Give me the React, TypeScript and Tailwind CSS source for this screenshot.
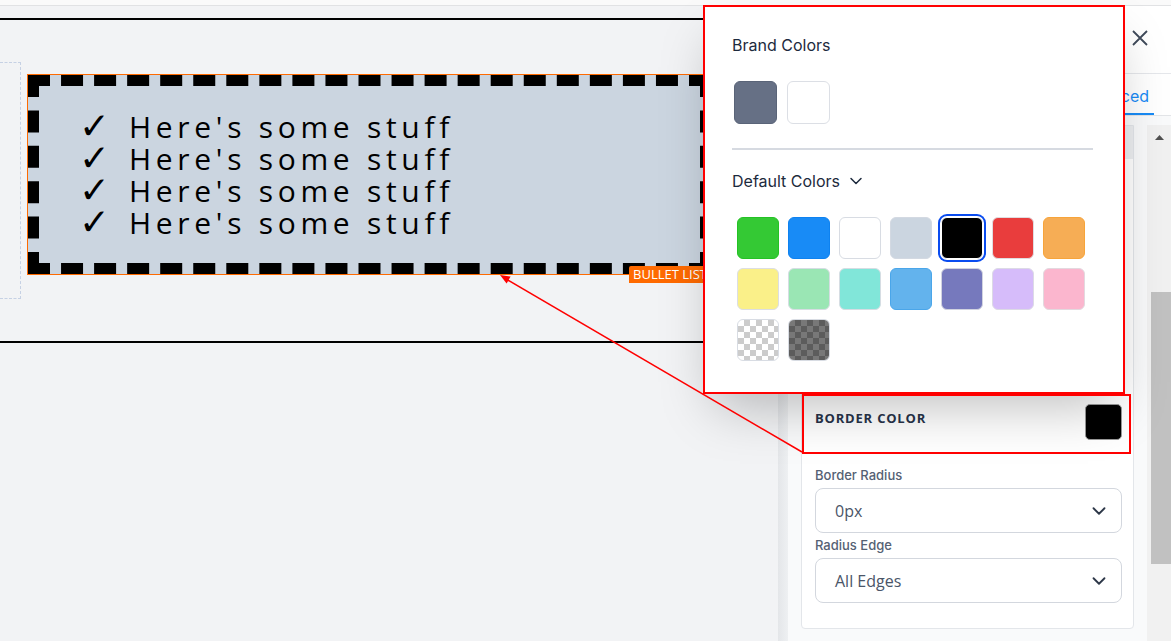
import React from 'react';
import { ChevronDown } from 'lucide-react';

const brandColors = ['bg-[#667085] border-[#5a6478]', 'bg-white border-[#dcdfe5]'];

const defaultColors = [
  { cls: 'bg-[#34c934] border-[#25c225]' },
  { cls: 'bg-[#188bf6] border-[#0e82f0]' },
  { cls: 'bg-white border-[#d8dce3]' },
  { cls: 'bg-[#cbd5e0] border-[#d3d9e2]' },
  { cls: 'bg-black border-white', selected: true },
  { cls: 'bg-[#e93d3d] border-[#e0dde0]' },
  { cls: 'bg-[#f6ad55] border-[#f7a43a]' },
  { cls: 'bg-[#faf089] border-[#dcdee3]' },
  { cls: 'bg-[#9ae6b4] border-[#d6dde3]' },
  { cls: 'bg-[#81e6d9] border-[#d6dde3]' },
  { cls: 'bg-[#63b3ed] border-[#4aa6ea]' },
  { cls: 'bg-[#7679bd] border-[#d1d3e0]' },
  { cls: 'bg-[#d6bcfa] border-[#dcdae6]' },
  { cls: 'bg-[#fbb6ce] border-[#e3d9df]' },
  { cls: 'bg-[image:repeating-conic-gradient(#cccccc_0_25%,#ffffff_0_50%)] bg-[length:12px_12px] border-[#d8dce3]' },
  { cls: 'bg-[image:repeating-conic-gradient(#5c5c5c_0_25%,#787878_0_50%)] bg-[length:12px_12px] border-[#d8dce3]' },
];

const items = [1, 2, 3, 4];

const SelectBox: React.FC<{ value: string }> = ({ value }) => (
  <div className="flex items-center justify-between h-[45px] w-[307px] rounded-[8px] border border-[#d3d7de] bg-white pl-[19px] pr-[11px]">
    <span className="text-[16px] text-[#4a5568]">{value}</span>
    <ChevronDown size={22} strokeWidth={2} className="text-[#2d3748]" />
  </div>
);

const App: React.FC = () => {
  return (
    <div className="relative w-[1171px] h-[641px] overflow-hidden bg-[#f2f3f5] flex flex-col" style={{ fontFamily: "Inter, 'Noto Sans', sans-serif" }}>
      {/* top bar edge */}
      <div className="h-[6px] shrink-0 bg-[#fafafa] border-b border-[#e1e2e4]" />

      <div className="flex flex-1 min-h-0">
        {/* canvas */}
        <div className="w-[778px] shrink-0 pt-[12px]">
          <div className="h-[325px] border-y-2 border-black pt-[42px]">
            <div className="flex items-start">
              <div className="w-[21px] h-[237px] border-y border-r border-dashed border-[#c6d1e4]" />
              <div className="relative ml-[6px] mt-[12px] w-[685px] h-[201px] border border-[#ff6a00]">
                <div
                  className="h-full border-[11px] border-dashed border-black bg-[#cbd5e0] pl-[44px] pt-[25px] text-black text-[30px] leading-[32px] tracking-[4.7px]"
                  style={{ fontFamily: "'Open Sans', 'DejaVu Sans', sans-serif" }}
                >
                  {items.map((i) => (
                    <div key={i} className="flex items-center h-[32px] whitespace-nowrap">
                      <span className="-ml-[4px] w-[50px] text-[37px] leading-[32px] font-bold" style={{ fontFamily: "'DejaVu Sans', sans-serif" }}>✓</span>
                      <span>Here's some stuff</span>
                    </div>
                  ))}
                </div>
                <div
                  className="absolute right-0 -bottom-[9px] h-[17px] px-[4px] bg-[#ff6a00] text-white text-[13px] leading-[17px] rounded-tl-[2px] whitespace-nowrap"
                  style={{ fontFamily: "'Open Sans', sans-serif" }}
                >
                  BULLET LIST
                </div>
              </div>
            </div>
          </div>
        </div>

        {/* right settings panel */}
        <div className="flex flex-1 min-w-0">
          <div className="w-[10px] shrink-0 bg-gradient-to-r from-[#e4e6e9] to-[#eef0f2]" />
          <div className="flex flex-col flex-1 min-w-0 bg-[#f9fafb]">
            <div className="h-[68px] shrink-0 bg-white border-b border-[#e5e7eb] flex items-center justify-end pr-[23px] pb-[4px]">
              <svg width="16" height="16" viewBox="0 0 16 16" className="text-[#3f4a5a]">
                <path d="M1 1 15 15M15 1 1 15" stroke="currentColor" strokeWidth="1.8" fill="none" />
              </svg>
            </div>
            <div className="h-[42px] shrink-0 bg-white border-b border-[#e3e5e8] flex justify-end pr-[17px]">
              <div className="flex items-center pt-[5px] px-[5px] border-b-2 border-[#188bf6] text-[16px] text-[#188bf6]">
                Advanced
              </div>
            </div>
            <div className="flex flex-1 min-h-0 pt-[9px]">
              <div className="flex-1 px-[13px]">
                <div className="w-[333px] bg-white border border-[#e3e6ea] rounded-b-[4px]" style={{ fontFamily: "'Open Sans', sans-serif" }}>
                  <div className="h-[33px] bg-[#eceef1]" />
                  <div className="h-[236px]" />
                  <div className="h-[59px] flex items-start justify-between pl-[13px] pr-[11px] pt-[9px]">
                    <span className="mt-[5px] text-[13px] leading-[18px] font-bold tracking-[0.8px] text-[#27334a]">BORDER COLOR</span>
                    <div className="w-[37px] h-[36px] rounded-[5px] bg-black border border-[#9a9a9a]" />
                  </div>
                  <div className="pl-[13px] pr-[11px] pb-[25px]" >
                    <div className="mt-[12px] text-[13px] leading-[18px] font-medium text-[#556174]" style={{ fontFamily: "Inter, sans-serif" }}>Border Radius</div>
                    <div className="mt-[4px]">
                      <SelectBox value="0px" />
                    </div>
                    <div className="mt-[3px] text-[13px] leading-[18px] font-medium text-[#556174]" style={{ fontFamily: "Inter, sans-serif" }}>Radius Edge</div>
                    <div className="mt-[4px]">
                      <SelectBox value="All Edges" />
                    </div>
                  </div>
                </div>
              </div>
              {/* scrollbar */}
              <div className="w-[24px] shrink-0 bg-[#f1f1f1] flex flex-col items-center">
                <div className="h-[25px] w-full flex items-center justify-center">
                  <svg width="9" height="5" viewBox="0 0 9 5">
                    <path d="M4.5 0 9 5H0z" fill="#505050" />
                  </svg>
                </div>
                <div className="mt-[142px] ml-[4px] w-[21px] h-[272px] bg-[#c1c1c1]" />
              </div>
            </div>
          </div>
        </div>
      </div>

      {/* color picker popover */}
      <div className="absolute left-[703px] top-[5px] w-[422px] h-[389px] bg-white border-2 border-[#ff0000] shadow-[0_25px_50px_-12px_rgba(0,0,0,0.25)] pt-[26px] pl-[27px] pr-[28px]">
        <div className="text-[16px] leading-[24px] text-[#1d2a3d]">Brand Colors</div>
        <div className="mt-[24px] ml-[2px] flex gap-[10px]">
          {brandColors.map((c, i) => (
            <div key={i} className={`w-[43px] h-[43px] rounded-[6px] border ${c}`} />
          ))}
        </div>
        <div className="mt-[24px] h-[2px] w-[361px] bg-[#d6dae1]" />
        <div className="mt-[19px] flex items-center text-[16px] leading-[24px] text-[#1d2a3d]">
          Default Colors
          <ChevronDown size={20} strokeWidth={1.8} className="ml-[6px]" />
        </div>
        <div className="mt-[24px] ml-[5px] grid grid-cols-[repeat(7,42px)] gap-x-[9px] gap-y-[9px]">
          {defaultColors.map((c, i) => (
            <div
              key={i}
              className={`w-[42px] h-[42px] rounded-[6px] border ${c.cls} ${c.selected ? 'ring-2 ring-[#0a4cf0] ring-offset-[1px]' : ''}`}
            />
          ))}
        </div>
      </div>

      {/* annotation box around border color */}
      <div className="absolute left-[802px] top-[394px] w-[329px] h-[60px] border-2 border-[#ff0000] pointer-events-none" />

      {/* annotation arrow */}
      <svg className="absolute left-0 top-0 pointer-events-none" width="1171" height="641" viewBox="0 0 1171 641">
        <line x1="802" y1="452" x2="506" y2="279" stroke="#ff0000" strokeWidth="1.5" />
        <polygon points="500,275 510.6,276.6 506.6,283.5" fill="#ff0000" />
      </svg>
    </div>
  );
};

export default App;
